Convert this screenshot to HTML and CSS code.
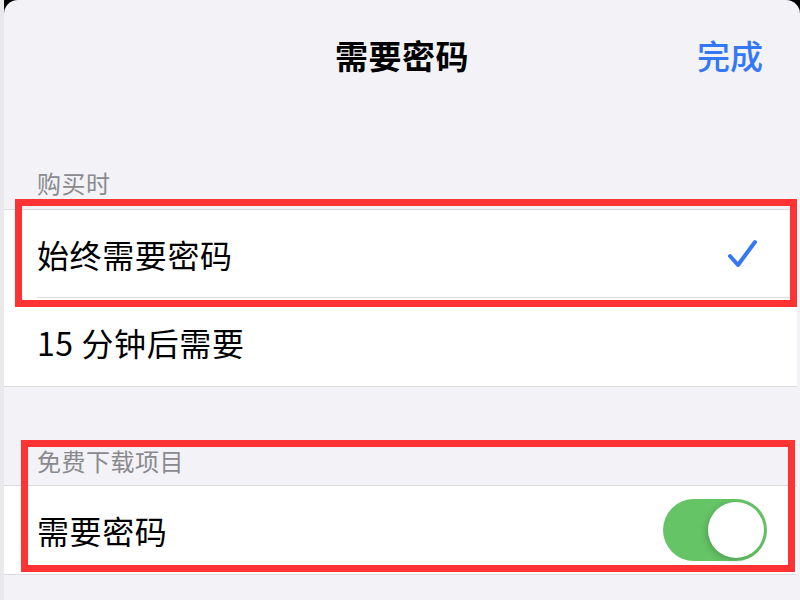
FILE: index.html
```html
<!DOCTYPE html>
<html lang="zh-CN">
<head>
<meta charset="utf-8">
<title>需要密码</title>
<link rel="stylesheet" href="styles.css">
</head>
<body>
<div class="frame">
  <div class="sheet">
    <header class="nav">
      <div class="nav-title">需要密码</div>
      <div class="nav-done">完成</div>
    </header>

    <div class="section-header first">购买时</div>
    <div class="group">
      <div class="row">
        <span class="row-label">始终需要密码</span>
        <svg class="check" width="32" height="30" viewBox="0 0 32 30"><path d="M3 17 L11 26 L28 3" fill="none" stroke="#3478f6" stroke-width="4" stroke-linecap="round" stroke-linejoin="round"/></svg>
      </div>
      <div class="row">
        <span class="row-label">15 分钟后需要</span>
      </div>
    </div>

    <div class="section-header second">免费下载项目</div>
    <div class="group">
      <div class="row">
        <span class="row-label">需要密码</span>
        <div class="toggle"><div class="knob"></div></div>
      </div>
    </div>
  </div>
</div>
<div class="mark mark-one"></div>
<div class="mark mark-two"></div>
</body>
</html>
```

FILE: styles.css
```css
html, body {
  margin: 0;
  padding: 0;
}
body {
  width: 800px;
  height: 600px;
  overflow: hidden;
  background: #e9e9eb;
  font-family: "Noto Sans CJK SC", "Noto Sans", sans-serif;
  position: relative;
}
.frame {
  margin-left: 4px;
  width: 796px;
  height: 600px;
  background: linear-gradient(#000 0, #000 20px, #f2f2f7 20px);
}
.sheet {
  height: 600px;
  background: #f2f2f7;
  border-radius: 14px 14px 0 0;
}
.nav {
  height: 110px;
  display: flex;
  align-items: center;
  justify-content: center;
  position: relative;
}
.nav-title {
  font-size: 33px;
  font-weight: 700;
  color: #000;
  line-height: 40px;
  margin-left: 0;
  letter-spacing: 0.5px;
}
.nav-done {
  position: absolute;
  right: 37px;
  top: 35px;
  font-size: 33px;
  line-height: 40px;
  color: #3478f6;
  font-weight: 500;
}
.section-header {
  display: flex;
  align-items: flex-end;
  box-sizing: border-box;
  padding-left: 33px;
  font-size: 24px;
  line-height: 24px;
  color: #8a8a8e;
  letter-spacing: 0.5px;
}
.section-header.first {
  height: 99px;
  padding-bottom: 14px;
}
.section-header.second {
  height: 98px;
  padding-bottom: 12px;
}
.group {
  background: #fff;
  border-top: 1px solid #dcdce0;
  border-bottom: 1px solid #dcdce0;
  margin-right: 3px;
}
.row {
  height: 88px;
  display: flex;
  align-items: center;
  justify-content: space-between;
  padding: 0 30px 0 33px;
  position: relative;
}
.row + .row::before {
  content: "";
  position: absolute;
  left: 33px;
  right: 0;
  top: -1px;
  border-top: 1px solid #dcdce0;
}
.row-label {
  font-size: 32px;
  line-height: 40px;
  color: #000;
  letter-spacing: 0.6px;
}
.check {
  margin-right: 8px;
}
.toggle {
  width: 104px;
  height: 62px;
  border-radius: 31px;
  background: #65c466;
  position: relative;
}
.knob {
  position: absolute;
  right: 3px;
  top: 3px;
  width: 56px;
  height: 56px;
  border-radius: 50%;
  background: #fff;
  box-shadow: -2px 2px 6px rgba(0,0,0,0.18);
}
.mark {
  position: absolute;
  border: 7px solid #ff3333;
  box-sizing: border-box;
}
.mark-one {
  left: 15px;
  top: 199px;
  width: 782px;
  height: 108px;
}
.mark-two {
  left: 21px;
  top: 440px;
  width: 774px;
  height: 132px;
}
```
